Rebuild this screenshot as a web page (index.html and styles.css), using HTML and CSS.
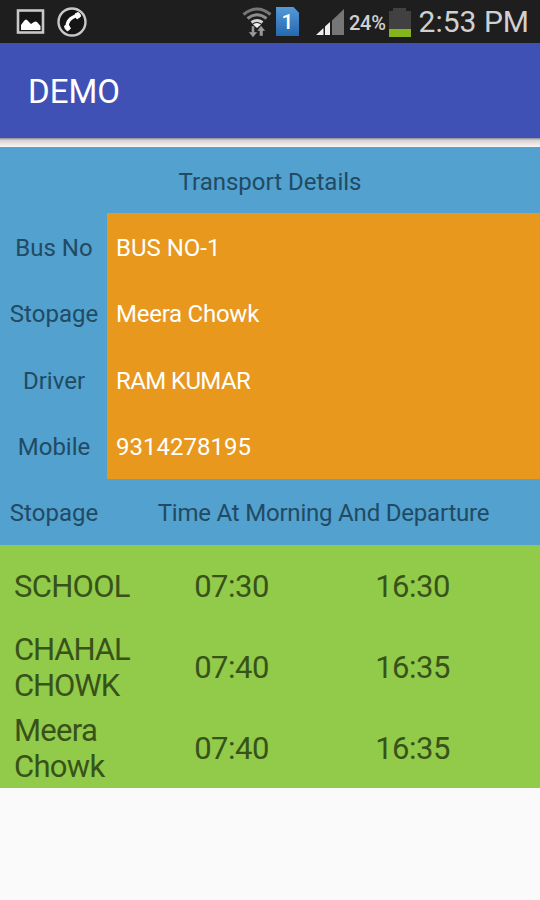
FILE: index.html
```html
<!DOCTYPE html>
<html lang="en">
<head>
  <meta charset="UTF-8">
  <meta name="viewport" content="width=device-width, initial-scale=1.0">
  <title>Transport Details</title>
  <link rel="stylesheet" href="styles.css">
</head>
<body>
  <div class="status-bar">
    <svg width="30" height="28" viewBox="0 0 30 28">
      <rect x="2" y="2.500" width="25" height="22" fill="#151515" stroke="#c8c8c8" stroke-width="2.600"/>
      <path d="M5 22v-5l3-4q2-3 4 0l3 3 3-2q2-1 3 0l3.500 4v4z" fill="#fff"/>
    </svg>
    <svg class="icon-call" width="32" height="32" viewBox="0 0 32 32">
      <circle cx="16" cy="16" r="13.5" fill="#151515" stroke="#c8c8c8" stroke-width="2.4"/>
      <path d="M11 22Q10.500 12.500 21 9.500" fill="none" stroke="#fff" stroke-width="3.2"/>
      <path d="M8.500 20l4-1 2 3.500-3 2.500q-3-2-3-5zM19 8l3-1.500q3 1.500 2.500 4l-3.500 2.500z" fill="#fff" stroke="#fff" stroke-linejoin="round"/>
    </svg>
    <div class="status-right">
      <svg width="30" height="32" viewBox="0 0 30 32">
        <g fill="none" stroke-width="3">
          <path d="M1.5 8.5q13.500-11 27 0" stroke="#777"/>
          <path d="M5.5 12.5q9.500-7.500 19 0" stroke="#8c8c8c"/>
          <path d="M9.5 16.5q5.500-4 11 0" stroke="#d5d5d5"/>
        </g>
        <path d="M11 18.5q4-3 8 0l-4 3.500z" fill="#eee"/>
        <path d="M9.500 20h3v6h3l-4.500 5.500L6.500 26h3zM17.500 30v-5H15l4-5.500 4.500 5.500H21v5z" fill="#999" stroke="#1c1c1c" stroke-width=".4"/>
      </svg>
      <div class="sim">1</div>
      <svg class="icon-signal" width="28" height="28" viewBox="0 0 28 28">
        <path d="M16 12.5L28 1v26H16z" fill="#767676"/>
        <path d="M0 27l7.500-7v7zM9 18.500l5-4.500v13H9z" fill="#eee"/>
      </svg>
      <span class="percent">24%</span>
      <svg class="icon-battery" width="22" height="29" viewBox="0 0 22 29">
        <path d="M0 3h4V0h13v3h5v18H0z" fill="#414141"/>
        <path d="M0 21h22v8H0z" fill="#84b51b"/>
      </svg>
      <span class="clock">2:53 PM</span>
    </div>
  </div>

  <div class="toolbar">DEMO</div>
  <div class="toolbar-shadow"></div>

  <div class="details">
    <div class="title">Transport Details</div>
    <div class="row">
      <div class="label">Bus No</div>
      <div class="value number">BUS NO-1</div>
    </div>
    <div class="row">
      <div class="label">Stopage</div>
      <div class="value">Meera Chowk</div>
    </div>
    <div class="row">
      <div class="label">Driver</div>
      <div class="value caps">RAM KUMAR</div>
    </div>
    <div class="row">
      <div class="label">Mobile</div>
      <div class="value number">9314278195</div>
    </div>
    <div class="row">
      <div class="label">Stopage</div>
      <div class="heading">Time At Morning And Departure</div>
    </div>
  </div>

  <div class="stops">
    <div class="stop">
      <div class="name">SCHOOL</div>
      <div class="time">07:30</div>
      <div class="time">16:30</div>
    </div>
    <div class="stop">
      <div class="name caps">CHAHAL CHOWK</div>
      <div class="time">07:40</div>
      <div class="time">16:35</div>
    </div>
    <div class="stop">
      <div class="name">Meera Chowk</div>
      <div class="time">07:40</div>
      <div class="time">16:35</div>
    </div>
  </div>
</body>
</html>
```
FILE: styles.css
```css
* {
  box-sizing: border-box;
}
body {
  margin: 0;
  width: 540px;
  height: 900px;
  overflow: hidden;
  font-family: Roboto, sans-serif;
  background: #fafafa;
}
.status-bar {
  display: flex;
  align-items: center;
  height: 43px;
  padding: 0 11px 0 16px;
  background: #1e1e1e;
  color: #d0d0d0;
}
.icon-call {
  margin-left: 10px;
}
.status-right {
  display: flex;
  align-items: center;
  margin-left: auto;
}
.sim {
  width: 23px;
  height: 29px;
  margin-left: 4px;
  background: linear-gradient(#5599d8, #2468ae);
  clip-path: polygon(0 0, 76% 0, 100% 20%, 100% 100%, 0 100%);
  color: #fff;
  font-size: 21px;
  font-weight: 500;
  line-height: 30px;
  text-align: center;
}
.icon-signal {
  margin-left: 17px;
}
.percent {
  margin-left: 5px;
  padding-top: 2px;
  font-size: 20px;
  font-weight: 500;
  letter-spacing: -0.3px;
}
.icon-battery {
  margin-left: 3px;
  margin-top: 2px;
}
.clock {
  margin-left: 8px;
  font-size: 30px;
  line-height: 43px;
}
.toolbar {
  display: flex;
  align-items: center;
  height: 95px;
  padding: 2px 28px 0;
  background: #3f51b5;
  color: #fff;
  font-size: 33px;
}
.toolbar-shadow {
  height: 9px;
  background: linear-gradient(#8a8a96, #d8d2d2 25%, #e9e4e4 60%, #f8f6f6);
}
.details {
  height: 398px;
  display: grid;
  grid-template-rows: repeat(6, 1fr);
  background: #52a1cf;
  color: #214a63;
  font-size: 24px;
}
.title {
  display: flex;
  align-items: center;
  justify-content: center;
  padding-top: 3px;
}
.row {
  display: grid;
  grid-template-columns: 107px 1fr;
}
.label,
.value,
.heading {
  display: flex;
  align-items: center;
  padding-top: 3px;
}
.label,
.heading {
  justify-content: center;
}
.label {
  padding-left: 1px;
}
.heading {
  letter-spacing: -0.2px;
}
.value {
  padding-left: 9px;
  background: #e7981d;
  color: #fff;
  letter-spacing: -0.25px;
}
.value.caps {
  letter-spacing: -0.6px;
}
.value.number {
  letter-spacing: 0;
}
.stops {
  display: grid;
  grid-template-rows: repeat(3, 81px);
  background: #92ca49;
  color: #37531a;
  font-size: 31px;
  line-height: 36px;
}
.stop {
  display: grid;
  grid-template-columns: 141px 181px 181px;
  align-items: center;
  padding-top: 2px;
}
.name {
  padding-left: 14px;
  letter-spacing: -0.7px;
}
.name.caps {
  letter-spacing: -1.1px;
}
.time {
  text-align: center;
  letter-spacing: -0.5px;
}
```
